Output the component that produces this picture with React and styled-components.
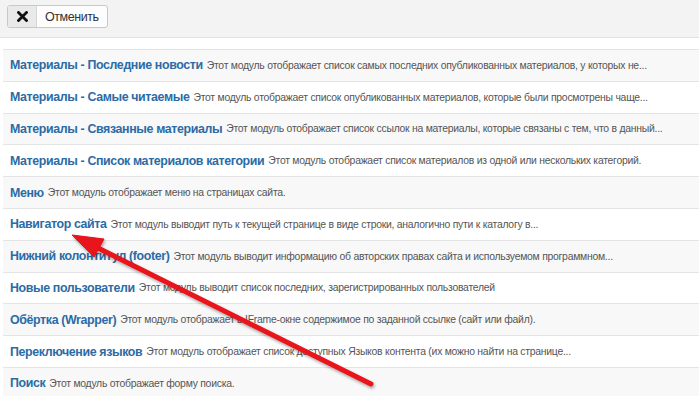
import React from 'react'
import styled, { createGlobalStyle } from 'styled-components'

const GlobalStyle = createGlobalStyle`
  html, body { margin: 0; padding: 0; background: #fff; }
  body { font-family: "Liberation Sans", Arial, sans-serif; overflow: hidden; }
`

const modules = [
  { id: 1, title: 'Материалы - Последние новости', text: 'Этот модуль отображает список самых последних опубликованных материалов, у которых не...' },
  { id: 2, title: 'Материалы - Самые читаемые', text: 'Этот модуль отображает список опубликованных материалов, которые были просмотрены чаще...' },
  { id: 3, title: 'Материалы - Связанные материалы', text: 'Этот модуль отображает список ссылок на материалы, которые связаны с тем, что в данный...' },
  { id: 4, title: 'Материалы - Список материалов категории', text: 'Этот модуль отображает список материалов из одной или нескольких категорий.' },
  { id: 5, title: 'Меню', text: 'Этот модуль отображает меню на страницах сайта.' },
  { id: 6, title: 'Навигатор сайта', text: 'Этот модуль выводит путь к текущей странице в виде строки, аналогично пути к каталогу в...' },
  { id: 7, title: 'Нижний колонтитул (footer)', text: 'Этот модуль выводит информацию об авторских правах сайта и используемом программном...' },
  { id: 8, title: 'Новые пользователи', text: 'Этот модуль выводит список последних, зарегистрированных пользователей' },
  { id: 9, title: 'Обёртка (Wrapper)', text: 'Этот модуль отображает в IFrame-окне содержимое по заданной ссылке (сайт или файл).' },
  { id: 10, title: 'Переключение языков', text: 'Этот модуль отображает список доступных Языков контента (их можно найти на странице...' },
  { id: 11, title: 'Поиск', text: 'Этот модуль отображает форму поиска.' },
]

const Page = styled.div`
  position: relative;
  width: 699px;
  height: 396px;
  overflow: hidden;
`

const Toolbar = styled.div`
  height: 38px;
  background: #f3f3f3;
  border-bottom: 1px solid #e2e2e2;
  padding: 5px 0 0 7px;
  box-sizing: border-box;
`

const Button = styled.button`
  display: inline-flex;
  align-items: stretch;
  height: 23px;
  padding: 0;
  border: 1px solid #c8c8c8;
  border-radius: 3px;
  background: #fdfdfd;
  font-family: "Liberation Sans", Arial, sans-serif;
  font-size: 12.5px;
  letter-spacing: -0.45px;
  color: #333;
  overflow: hidden;
  box-sizing: border-box;
`

const IconBox = styled.span`
  width: 28px;
  display: flex;
  align-items: center;
  justify-content: center;
  background: #e9e9e9;
  border-right: 1px solid #d4d4d4;
`

const Label = styled.span`
  display: flex;
  align-items: center;
  padding: 0 8px 0 8px;
`

const List = styled.div`
  margin: 11px 0 0 3px;
  border-top: 1px solid #e4e4e4;
`

const Row = styled.div`
  height: 31.8px;
  box-sizing: border-box;
  display: flex;
  align-items: center;
  padding: 0 0 0 7px;
  background: ${p => (p.$odd ? '#f8f8f8' : '#ffffff')};
  border-bottom: 1px solid #e4e4e4;
  white-space: nowrap;
`

const Title = styled.span`
  font-weight: bold;
  font-size: 12.4px;
  letter-spacing: -0.37px;
  color: #2b6ba6;
  margin-right: 4px;
`

const Desc = styled.span`
  font-size: 10.4px;
  letter-spacing: -0.25px;
  color: #555;
`

const ArrowLayer = styled.svg`
  position: absolute;
  left: 0;
  top: 0;
  pointer-events: none;
`

const App = () => {
  return (
    <Page>
      <GlobalStyle />
      <Toolbar>
        <Button>
          <IconBox>
            <svg width="11" height="11" viewBox="0 0 11 11">
              <path d="M1.5 1.5 L9.5 9.5 M9.5 1.5 L1.5 9.5" stroke="#111" strokeWidth="2.8" strokeLinecap="square" />
            </svg>
          </IconBox>
          <Label>Отменить</Label>
        </Button>
      </Toolbar>
      <List>
        {modules.map((m, i) => (
          <Row key={m.id} $odd={i % 2 === 0}>
            <Title>{m.title}</Title>
            <Desc>{m.text}</Desc>
          </Row>
        ))}
      </List>
      <ArrowLayer width="699" height="396" viewBox="0 0 699 396">
        <defs>
          <filter id="sh" x="-10%" y="-10%" width="120%" height="120%">
            <feDropShadow dx="1" dy="2" stdDeviation="1.5" floodColor="#000" floodOpacity="0.35" />
          </filter>
        </defs>
        <g filter="url(#sh)" fill="#e8121a" stroke="#e8121a">
          <line x1="371" y1="384" x2="96" y2="247" strokeWidth="5" strokeLinecap="round" />
          <polygon points="72,235 94,257 104,239" strokeWidth="1" strokeLinejoin="round" />
        </g>
      </ArrowLayer>
    </Page>
  )
}

export default App
